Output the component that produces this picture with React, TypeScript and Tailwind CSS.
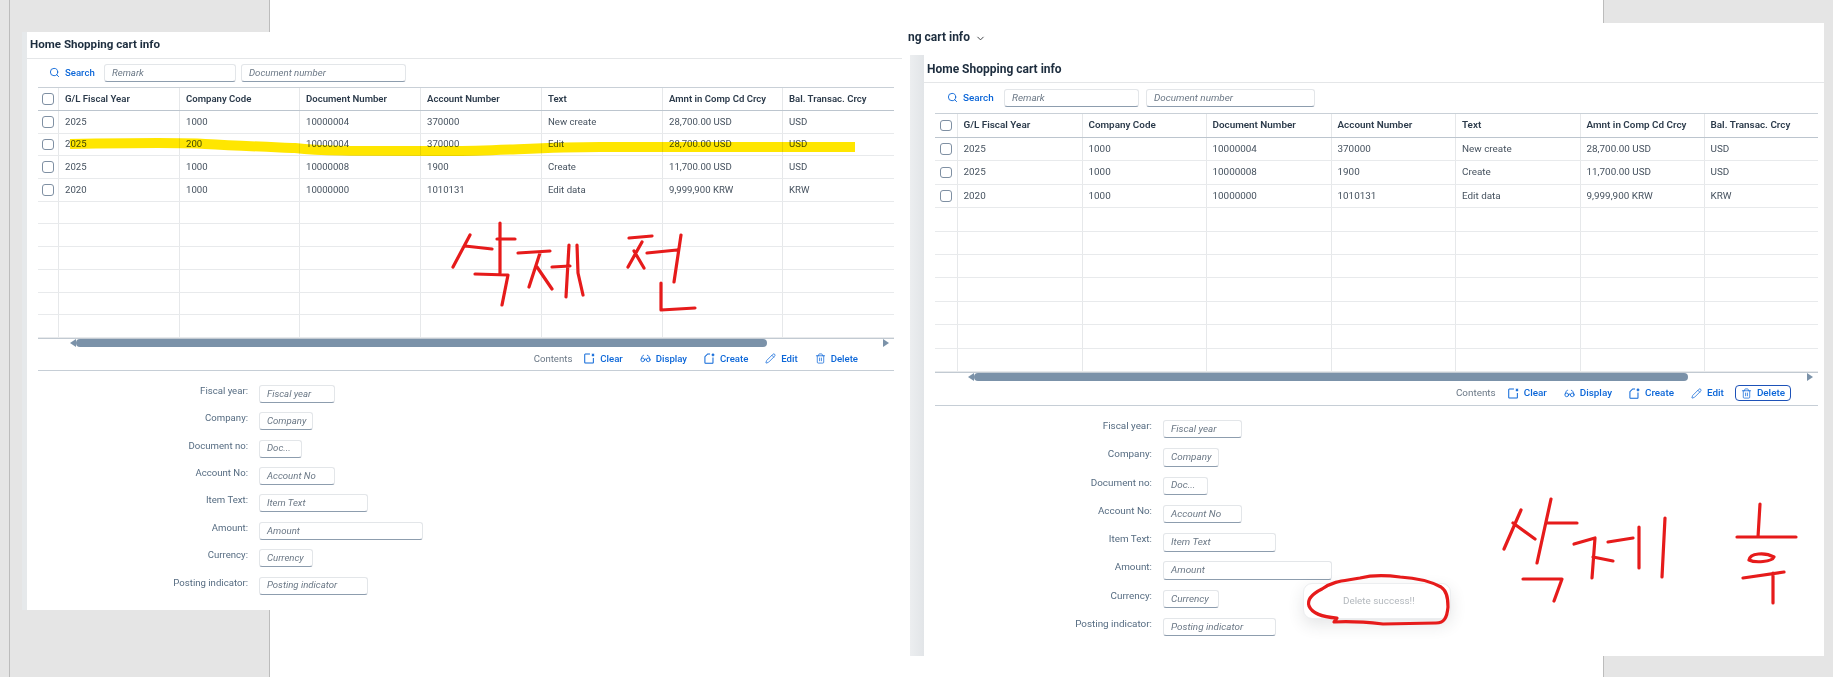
import { ChevronDown, Glasses, Pencil, Search, Trash2 } from 'lucide-react';

const font = "[font-family:Roboto,'Liberation_Sans',sans-serif]";

const headers = ['G/L Fiscal Year', 'Company Code', 'Document Number', 'Account Number', 'Text', 'Amnt in Comp Cd Crcy', 'Bal. Transac. Crcy'];

const before = [
    ['2025', '1000', '10000004', '370000', 'New create', '28,700.00 USD', 'USD'],
    ['2025', '200', '10000004', '370000', 'Edit', '28,700.00 USD', 'USD'],
    ['2025', '1000', '10000008', '1900', 'Create', '11,700.00 USD', 'USD'],
    ['2020', '1000', '10000000', '1010131', 'Edit data', '9,999,900 KRW', 'KRW'],
];

const after = [before[0], before[2], before[3]];

// label, input width left shot, input width right shot
const formRows: [string, string, string][] = [
    ['Fiscal year', 'w-[76px]', 'w-[79px]'],
    ['Company', 'w-[54px]', 'w-[56px]'],
    ['Document no', 'w-[43px]', 'w-[45px]'],
    ['Account No', 'w-[76px]', 'w-[79px]'],
    ['Item Text', 'w-[109px]', 'w-[113px]'],
    ['Amount', 'w-[164px]', 'w-[169px]'],
    ['Currency', 'w-[54px]', 'w-[56px]'],
    ['Posting indicator', 'w-[109px]', 'w-[113px]'],
];

const placeholders: Record<string, string> = {
    'Document no': 'Doc...',
};

const small = {
    text: 'text-[9.6px]',
    title: 'text-[11.6px] h-[27px] pl-[3px]',
    toolbar: 'h-[28px] pl-[11px]',
    search: 'w-[66px] pl-[11px]',
    remark: 'w-[132px]',
    docNumber: 'w-[165px] ml-[5px]',
    field: 'h-[18px] px-[7px]',
    table: 'w-[856px] ml-[11px]',
    cols: 'grid-cols-[21px_121px_120px_121px_121px_121px_120px_111px]',
    head: 'h-[23px]',
    row: 'h-[22.7px]',
    scroll: 'h-[10px]',
    arrowLeft: 'ml-[26px] w-[12px]',
    thumb: 'w-[691px]',
    arrowRight: 'ml-[116px]',
    actions: 'h-[23px] pr-[36px] gap-[17px]',
    form: 'pt-[14px] gap-y-[9.4px] grid-cols-[221px_1fr] gap-x-[11px]',
};

const large = {
    text: 'text-[9.9px]',
    title: 'text-[12px] h-[28px] pl-[3px]',
    toolbar: 'h-[30px] pl-[11px]',
    search: 'w-[69px] pl-[12px]',
    remark: 'w-[135px]',
    docNumber: 'w-[169px] ml-[7px]',
    field: 'h-[18.5px] px-[7px]',
    table: 'w-[883px] ml-[11px]',
    cols: 'grid-cols-[22.5px_125px_124px_125px_124.5px_124.5px_124px_113.5px]',
    head: 'h-[24px]',
    row: 'h-[23.4px]',
    scroll: 'h-[10px]',
    arrowLeft: 'ml-[27px] w-[12px]',
    thumb: 'w-[714px]',
    arrowRight: 'ml-[119px]',
    actions: 'h-[24px] pr-[33px] gap-[17px]',
    form: 'pt-[14px] gap-y-[9.8px] grid-cols-[228px_1fr] gap-x-[11px]',
};

type Sizes = typeof small;

const ClearIcon = () => (
    <svg viewBox="0 0 12 12" className="w-[11px] h-[11px] shrink-0" fill="none" stroke="currentColor" strokeWidth="1.1">
        <path d="M6.5 1.2H1.4a.6.6 0 0 0-.6.6v8.6a.6.6 0 0 0 .6.6h8.2a.6.6 0 0 0 .6-.6V5.5" />
        <path d="M8.6 .8l2.4 2.6M11 .8L8.6 3.4" />
    </svg>
);

const CreateIcon = () => (
    <svg viewBox="0 0 12 12" className="w-[11px] h-[11px] shrink-0" fill="none" stroke="currentColor" strokeWidth="1.1">
        <path d="M6.6 1.1H4L1 4.1v6.6a.6.6 0 0 0 .6.6h7.6a.6.6 0 0 0 .6-.6V5" />
        <path d="M9.8 .6v3M8.3 2.1h3" strokeWidth="1.5" />
    </svg>
);

const Box = () => <div className="w-[11.5px] h-[11.5px] rounded-[3px] border border-[#7f90a3] bg-white" />;

const Field = ({ text, className }: { text: string; className: string }) => (
    <div className={`flex items-center rounded-[3px] border border-[#e3e6e9] border-b-[1.5px] border-b-[#8d9dae] bg-white italic text-[#6a7785] whitespace-nowrap overflow-hidden ${className}`}>
        {text}
    </div>
);

const ActionButton = ({ icon, label, boxed }: { icon: React.ReactNode; label: string; boxed?: boolean }) => (
    <div className={`flex items-center gap-[5px] font-medium text-[#0b66d8] ${boxed ? 'h-[16px] px-[5px] -mx-[6px] rounded-[4px] border-[1.5px] border-[#1d52b8]' : ''}`}>
        {icon}
        <span>{label}</span>
    </div>
);

const Screen = ({ s, rows, formWidth, deleteFocused }: { s: Sizes; rows: string[][]; formWidth: 1 | 2; deleteFocused?: boolean }) => {
    const empties = Array.from({ length: 10 - rows.length }, (_, i) => i);
    return (
        <div className={`flex-1 min-w-0 flex flex-col bg-white ${font} ${s.text}`}>
            <div className={`flex items-center shrink-0 border-b-[1.5px] border-[#e4e6e8] font-bold text-[#1d2d3e] ${s.title}`}>
                Home Shopping cart info
            </div>

            <div className={`flex items-center shrink-0 ${s.toolbar}`}>
                <div className={`flex items-center gap-[5px] font-medium text-[#0b66d8] ${s.search}`}>
                    <Search size={11} strokeWidth={2} className="shrink-0" />
                    <span>Search</span>
                </div>
                <Field text="Remark" className={`${s.field} ${s.remark}`} />
                <Field text="Document number" className={`${s.field} ${s.docNumber}`} />
            </div>

            <div className={`shrink-0 border-t-[1.5px] border-[#c9d0d7] ${s.table}`}>
                <div className={`grid items-stretch border-b-[1.5px] border-[#bcc5ce] font-semibold text-[#2c3b4b] ${s.cols} ${s.head}`}>
                    <div className="flex items-center justify-center border-r border-[#e6e8ea]"><Box /></div>
                    {headers.map((h) => (
                        <div key={h} className="flex items-center pl-[6px] border-r border-[#e6e8ea] last:border-r-0 whitespace-nowrap">{h}</div>
                    ))}
                </div>
                {rows.map((row, i) => (
                    <div key={i} className={`grid items-stretch border-b border-[#e8eaec] text-[#46525f] ${s.cols} ${s.row}`}>
                        <div className="flex items-center justify-center border-r border-[#e6e8ea]"><Box /></div>
                        {row.map((cell, j) => (
                            <div key={j} className="flex items-center pl-[6px] border-r border-[#e6e8ea] last:border-r-0 whitespace-nowrap">{cell}</div>
                        ))}
                    </div>
                ))}
                {empties.map((i) => (
                    <div key={i} className={`grid items-stretch border-b border-[#e8eaec] last:border-b-0 ${s.cols} ${s.row}`}>
                        <div className="border-r border-[#e6e8ea]" />
                        {headers.map((h) => (
                            <div key={h} className="border-r border-[#e6e8ea] last:border-r-0" />
                        ))}
                    </div>
                ))}

                <div className={`flex items-center border-t-[1.5px] border-[#c2cad2] ${s.scroll}`}>
                    <div className={`w-0 h-0 border-y-[4px] border-y-transparent border-r-[6px] border-r-[#7b92a9] ${s.arrowLeft}`} />
                    <div className={`h-[8px] rounded-full bg-[#7b92a9] ${s.thumb}`} />
                    <div className={`w-0 h-0 border-y-[4px] border-y-transparent border-l-[6px] border-l-[#7b92a9] ${s.arrowRight}`} />
                </div>

                <div className={`flex items-center justify-end border-b-[1.5px] border-[#c6ced6] ${s.actions}`}>
                    <span className="text-[#6a7785] -mr-[5px]">Contents</span>
                    <ActionButton icon={<ClearIcon />} label="Clear" />
                    <ActionButton icon={<Glasses size={11} strokeWidth={1.8} className="shrink-0" />} label="Display" />
                    <ActionButton icon={<CreateIcon />} label="Create" />
                    <ActionButton icon={<Pencil size={11} strokeWidth={1.6} className="shrink-0" />} label="Edit" />
                    <ActionButton icon={<Trash2 size={11} strokeWidth={1.6} className="shrink-0" />} label="Delete" boxed={deleteFocused} />
                </div>
            </div>

            <div className={`grid ${s.form}`}>
                {formRows.map(([label, w1, w2]) => (
                    <div key={label} className="contents">
                        <div className="text-right text-[#556b81] leading-[12px] whitespace-nowrap">{label}:</div>
                        <Field text={placeholders[label] ?? label} className={`${s.field} ${formWidth === 1 ? w1 : w2}`} />
                    </div>
                ))}
            </div>
        </div>
    );
};

const Scribbles = () => (
    <svg className="absolute inset-0 w-full h-full pointer-events-none" viewBox="0 0 1833 677" fill="none" strokeLinecap="round" strokeLinejoin="round">
        <path className="mix-blend-multiply" d="M70 144 C130 143 190 143 205 144 C240 146 270 147 295 148 C320 151 340 151 450 151 C500 151 540 147 600 147 L855 147" stroke="#ffe600" strokeWidth="10" strokeLinecap="butt" />
        <g stroke="#e61b1b" strokeWidth="3.2">
            <path d="M470 235L453 267M465 246L492 249M500 223L500 273M497 239L515 239M475 274L508 275L502 305" />
            <path d="M518 253L550 251M540 253L529 287M537 267L552 289M552 267L570 266M569 245L566 297M577 245L578 273L583 295" />
            <path d="M629 238L652 236M642 242L628 267M634 251L644 268M647 253L677 250M681 235L674 282M661 283L661 310L695 308" />
            <path d="M1521 510L1504 549M1513 523L1535 539M1551 499L1537 563M1548 523L1577 523M1523 579L1562 579L1554 601" />
            <path d="M1574 544L1595 538L1592 578M1593 557L1613 561M1608 542L1633 538M1639 527L1639 568M1665 518L1662 577" />
            <path d="M1760 504L1758 537M1737 537L1796 537M1749 560C1750 553 1765 552 1774 557C1772 562 1755 563 1749 560M1743 578L1784 572M1773 573L1773 603" />
            <path d="M1400 577C1385 575 1372 575 1360 578C1345 581 1335 580 1322 589C1312 594 1307 600 1309 606C1312 613 1322 617 1337 618L1334 622C1350 621 1365 622 1383 624L1436 623C1444 623 1447 618 1448 607C1448 598 1447 591 1441 587C1430 581 1417 578 1400 577" />
        </g>
    </svg>
);

export default function App() {
    return (
        <div className="relative w-[1833px] h-[677px] bg-white overflow-hidden">
            {/* grey browser backgrounds behind the two pasted captures */}
            <div className="absolute left-0 top-0 w-[270px] h-[677px] bg-[#e5e5e5] border-r border-[#bcbcbc]">
                <div className="ml-[9px] w-px h-full bg-[#bcbcbc]" />
            </div>
            <div className="absolute left-[1603px] top-0 w-[230px] h-[677px] bg-[#e5e5e5] border-l border-[#bcbcbc]" />

            {/* before */}
            <div className="absolute left-[22px] top-[32px] w-[880px] h-[578px] flex bg-white">
                <div className="w-[5px] bg-[#e6e9eb]" />
                <Screen s={small} rows={before} formWidth={1} />
            </div>

            {/* after */}
            <div className="absolute left-[905px] top-[23px] w-[919px] h-[633px] flex flex-col bg-white">
                <div className={`h-[32px] pl-[5px] overflow-hidden flex items-end pb-[11px] gap-[5px] font-bold text-[12px] leading-[14px] text-[#1d2d3e] ${font}`}>
                    <span className="-ml-[2px]">ng cart info</span>
                    <ChevronDown size={11} strokeWidth={2} className="text-[#32363a]" />
                </div>
                <div className="flex-1 flex pl-[5px]">
                    <div className="w-[14px] bg-gradient-to-r from-[#eceef0] to-[#e2e5e8]" />
                    <Screen s={large} rows={after} formWidth={2} deleteFocused />
                </div>
            </div>

            {/* message toast */}
            <div className={`absolute left-[1303px] top-[583px] w-[148px] h-[36px] flex items-center pl-[39px] rounded-[9px] border border-[#eceef0] bg-white shadow-[0_6px_16px_rgba(40,50,60,0.12)] text-[9.9px] text-[#b3b8bd] ${font}`}>
                Delete success!!
            </div>

            <Scribbles />
        </div>
    );
}
